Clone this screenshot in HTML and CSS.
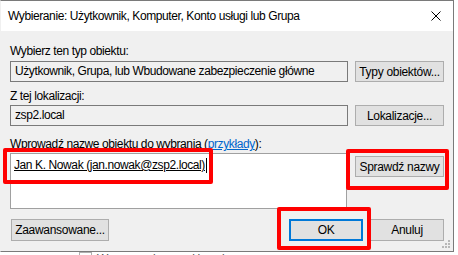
FILE: index.html
```html
<!DOCTYPE html>
<html lang="pl">
<head>
    <meta charset="UTF-8">
    <meta name="viewport" content="width=device-width, initial-scale=1.0">
    <title>Wybieranie: Użytkownik, Komputer, Konto usługi lub Grupa</title>
    <link rel="stylesheet" href="styles.css">
</head>
<body>

    <div class="window">
        <div class="titlebar">
            <span class="title">Wybieranie: Użytkownik, Komputer, Konto usługi lub Grupa</span>
            <svg class="close" width="10" height="10" viewBox="0 0 10 10">
                <path d="M0.5 0.5 L9.5 9.5 M9.5 0.5 L0.5 9.5" stroke="#000" stroke-width="1"/>
            </svg>
        </div>

        <div class="content">
            <div class="label">Wybierz ten typ obiektu:</div>
            <div class="row">
                <div class="field">Użytkownik, Grupa, lub Wbudowane zabezpieczenie główne</div>
                <button class="btn">Typy obiektów...</button>
            </div>

            <div class="label label-gap">Z tej lokalizacji:</div>
            <div class="row">
                <div class="field">zsp2.local</div>
                <button class="btn">Lokalizacje...</button>
            </div>

            <div class="label label-gap-lg">Wprowadź nazwę obiektu do wybrania (<a href="#" class="link">przykłady</a>):</div>
            <div class="row names-row">
                <div class="names-box">
                    <span class="name">Jan K. Nowak (jan.nowak@zsp2.local)</span><span class="caret"></span>
                </div>
                <div class="side">
                    <button class="btn">Sprawdź nazwy</button>
                </div>
            </div>

            <div class="footer">
                <button class="btn btn-wide">Zaawansowane...</button>
                <div class="spacer"></div>
                <button class="btn btn-ok">OK</button>
                <button class="btn btn-cancel">Anuluj</button>
            </div>
        </div>

        <svg class="grip" width="8" height="8" viewBox="0 0 8 8">
            <rect x="6" y="0" width="2" height="2" fill="#b8b8b8"/>
            <rect x="3" y="3" width="2" height="2" fill="#b8b8b8"/>
            <rect x="6" y="3" width="2" height="2" fill="#b8b8b8"/>
            <rect x="0" y="6" width="2" height="2" fill="#b8b8b8"/>
            <rect x="3" y="6" width="2" height="2" fill="#b8b8b8"/>
            <rect x="6" y="6" width="2" height="2" fill="#b8b8b8"/>
        </svg>

        <!-- red annotation frames -->
        <div class="mark mark-name"></div>
        <div class="mark mark-check"></div>
        <div class="mark mark-ok"></div>
    </div>

    <div class="below">
        <span class="checkbox"></span>
        <span class="below-text">Wymuszanie zasad haseł</span>
    </div>

</body>
</html>
```

FILE: styles.css
```css
body {
    margin: 0;
    height: 255px;
    overflow: hidden;
    background-color: #ffffff;
    font-family: "Liberation Sans", Arial, sans-serif;
    font-size: 12px;
    letter-spacing: -0.4px;
    color: #000000;
}
.window {
    position: relative;
    width: 454px;
    height: 252px;
    box-sizing: border-box;
    border: 1px solid #7a7a7a;
    border-left-color: #f0f0f0;
    background-color: #f0f0f0;
    display: flex;
    flex-direction: column;
}
.titlebar {
    height: 30px;
    background-color: #ffffff;
    display: flex;
    align-items: center;
    padding-left: 7px;
    padding-right: 12px;
}
.title {
    flex: 1;
}
.close {
    display: block;
}
.content {
    flex: 1;
    padding: 13px 9px 0 9px;
    display: flex;
    flex-direction: column;
}
.label {
    height: 15px;
    line-height: 15px;
    margin-bottom: 2px;
}
.label-gap {
    margin-top: 7px;
    margin-bottom: 1px;
}
.label-gap-lg {
    margin-top: 11px;
    margin-bottom: 1px;
}
.link {
    color: #0066cc;
}
.row {
    display: flex;
    gap: 7px;
}
.field {
    width: 338px;
    height: 21px;
    box-sizing: border-box;
    border: 1px solid #7a7a7a;
    padding: 0 4px;
    line-height: 19px;
    white-space: nowrap;
    overflow: hidden;
}
.btn {
    width: 89px;
    height: 21px;
    box-sizing: border-box;
    padding: 0;
    margin: 0;
    border: 1px solid #adadad;
    background-color: #e1e1e1;
    font-family: inherit;
    font-size: 12px;
    letter-spacing: -0.3px;
    color: #000000;
}
.names-row {
    gap: 8px;
}
.names-box {
    width: 337px;
    height: 56px;
    box-sizing: border-box;
    border: 1px solid #a0a0a0;
    background-color: #ffffff;
    padding: 4px 0 0 3px;
    display: flex;
    align-items: flex-start;
}
.name {
    line-height: 15px;
    text-decoration: underline;
}
.caret {
    width: 1px;
    height: 15px;
    margin-left: 1px;
    background-color: #000000;
}
.side {
    padding-top: 3px;
}
.footer {
    display: flex;
    margin-top: 10px;
    padding-left: 1px;
}
.footer .btn {
    height: 22px;
}
.btn-wide {
    width: 98px;
}
.spacer {
    flex: 1;
}
.btn-ok {
    width: 74px;
    border: 2px solid #0078d7;
}
.btn-cancel {
    width: 74px;
    margin-left: 7px;
}
.grip {
    position: absolute;
    right: 3px;
    bottom: 3px;
}
.mark {
    position: absolute;
    box-sizing: border-box;
    border: 4px solid #ff0000;
    border-radius: 2px;
}
.mark-name {
    left: 2px;
    top: 147px;
    width: 210px;
    height: 36px;
}
.mark-check {
    left: 345px;
    top: 148px;
    width: 103px;
    height: 41px;
}
.mark-ok {
    left: 276px;
    top: 206px;
    width: 94px;
    height: 43px;
}
.below {
    display: flex;
    align-items: flex-start;
    padding-left: 79px;
}
.checkbox {
    width: 13px;
    height: 13px;
    box-sizing: border-box;
    border: 1px solid #b0b0b0;
    background-color: #ffffff;
}
.below-text {
    margin-left: 5px;
    line-height: 15px;
    color: #555555;
}
```
